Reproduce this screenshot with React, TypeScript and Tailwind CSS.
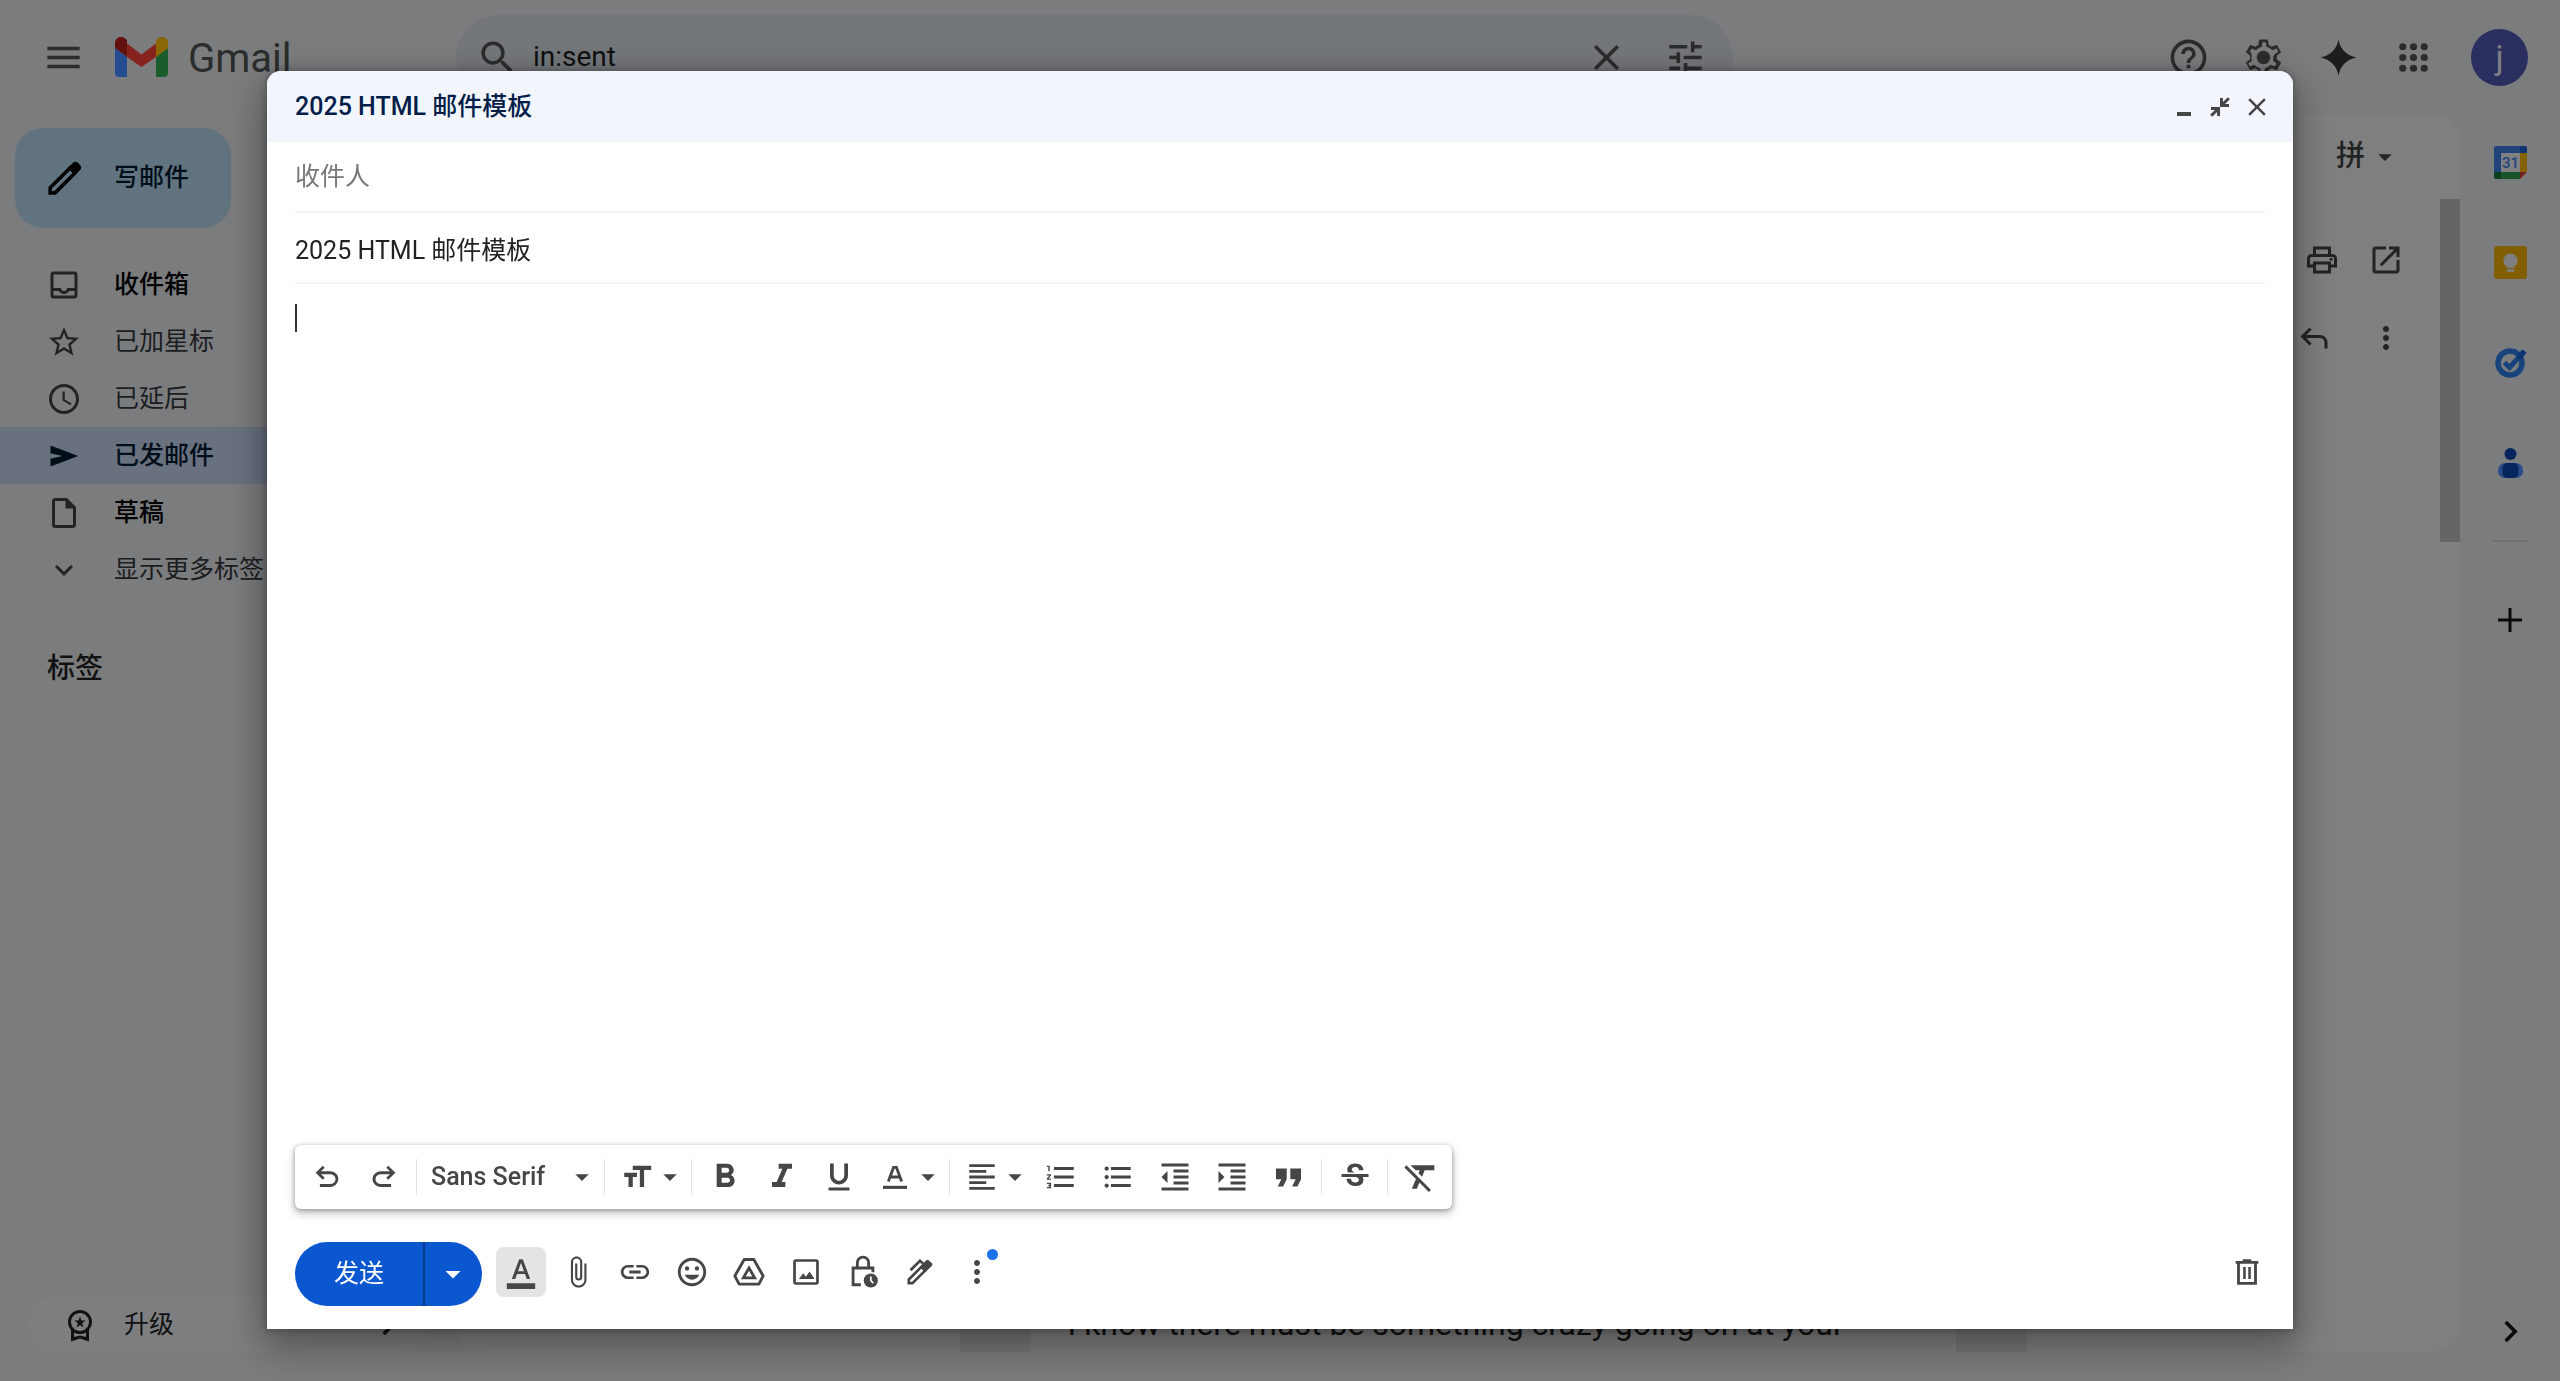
import { useState } from 'react';
import type { ComponentType, ReactNode } from 'react';
import {
  MdArrowDropDown,
  MdAttachFile,
  MdClose,
  MdExpandMore,
  MdFormatAlignLeft,
  MdFormatBold,
  MdFormatClear,
  MdFormatColorText,
  MdFormatIndentDecrease,
  MdFormatIndentIncrease,
  MdFormatItalic,
  MdFormatListBulleted,
  MdFormatListNumbered,
  MdFormatQuote,
  MdFormatSize,
  MdFormatUnderlined,
  MdHelpOutline,
  MdLink,
  MdMenu,
  MdMoreVert,
  MdOpenInNew,
  MdOutlineInbox,
  MdOutlineInsertDriveFile,
  MdOutlineInsertEmoticon,
  MdOutlinePrint,
  MdOutlineWorkspacePremium,
  MdSchedule,
  MdSearch,
  MdStarBorder,
  MdStrikethroughS,
  MdTune,
} from 'react-icons/md';

type IconProps = { className?: string };
type Icon = ComponentType<IconProps>;

/* Icons */

function Svg({ className, viewBox = '0 0 24 24', children }: IconProps & { viewBox?: string; children: ReactNode }) {
  return (
    <svg className={className} viewBox={viewBox} fill="currentColor" aria-hidden="true">
      {children}
    </svg>
  );
}

const UndoIcon = ({ className }: IconProps) => (
  <Svg className={className} viewBox="0 -960 960 960">
    <path d="M280-200v-80h284q63 0 109.5-40T720-420q0-60-46.5-100T564-560H312l104 104-56 56-200-200 200-200 56 56-104 104h252q97 0 169.5 63T800-420q0 94-72.5 157T564-200H280Z" />
  </Svg>
);

const RedoIcon = ({ className }: IconProps) => (
  <Svg className={className} viewBox="0 -960 960 960">
    <path d="M396-200q-97 0-169.5-63T154-420q0-94 72.5-157T396-640h252L544-744l56-56 200 200-200 200-56-56 104-104H396q-63 0-109.5 40T240-420q0 60 46.5 100T396-280h284v80H396Z" />
  </Svg>
);

const ReplyIcon = ({ className }: IconProps) => (
  <Svg className={className} viewBox="0 -960 960 960">
    <path d="M760-200v-160q0-50-35-85t-85-35H273l144 144-57 56-240-240 240-240 57 56-144 144h367q83 0 141.5 58.5T840-360v160h-80Z" />
  </Svg>
);

const PencilIcon = ({ className }: IconProps) => (
  <Svg className={className}>
    <path d="M4 17.2 15.2 6l2.8 2.8L6.8 20H4z" fill="none" stroke="currentColor" strokeWidth="2" />
    <path d="M13.8 6.2l2.9-2.9a2 2 0 0 1 2.9 0l1.1 1.1a2 2 0 0 1 0 2.9l-2.9 2.9z" />
  </Svg>
);

const SentIcon = ({ className }: IconProps) => (
  <Svg className={className}>
    <path d="M3 5l18.5 7L3 19v-5.2l8-1.8-8-1.8z" />
  </Svg>
);

const SparkIcon = ({ className }: IconProps) => (
  <Svg className={className}>
    <path d="M12 2c1 5.4 4.6 9 10 10-5.4 1-9 4.6-10 10-1-5.4-4.6-9-10-10 5.4-1 9-4.6 10-10z" />
  </Svg>
);

const SettingsIcon = ({ className }: IconProps) => (
  <Svg className={className}>
    <path d="M19.43 12.98c.04-.32.07-.64.07-.98s-.03-.66-.07-.98l2.11-1.65c.19-.15.24-.42.12-.64l-2-3.46a.5.5 0 0 0-.61-.22l-2.49 1c-.52-.4-1.08-.73-1.69-.98l-.38-2.65A.49.49 0 0 0 14 2h-4a.49.49 0 0 0-.49.42l-.38 2.65c-.61.25-1.17.59-1.69.98l-2.49-1a.5.5 0 0 0-.61.22l-2 3.46c-.13.22-.07.49.12.64l2.11 1.65c-.04.32-.07.65-.07.98s.03.66.07.98l-2.11 1.65c-.19.15-.24.42-.12.64l2 3.46c.12.22.39.3.61.22l2.49-1c.52.4 1.08.73 1.69.98l.38 2.65c.03.24.24.42.49.42h4c.25 0 .46-.18.49-.42l.38-2.65c.61-.25 1.17-.59 1.69-.98l2.49 1c.23.09.49 0 .61-.22l2-3.46c.12-.22.07-.49-.12-.64zM17.45 11.27c.04.31.05.52.05.73s-.02.43-.05.73l-.14 1.13 1.97 1.54-.95 1.63-2.31-.93-1.02.79c-.43.32-.84.56-1.25.73l-1.06.43-.35 2.45h-1.9l-.35-2.45-1.06-.43c-.43-.18-.83-.41-1.23-.71l-1.04-.81-2.31.93-.95-1.63 1.97-1.54-.14-1.13c-.03-.31-.05-.54-.05-.74s.02-.43.05-.73l.14-1.13L4.48 8.6l.95-1.63 2.31.93 1.02-.79c.43-.32.84-.56 1.25-.73l1.06-.43.35-2.45h1.9l.35 2.45 1.06.43c.43.18.83.41 1.23.71l1.04.81 2.31-.93.95 1.63-1.97 1.54z" />
    <circle cx="12" cy="12" r="3.8" />
  </Svg>
);

const AppsIcon = ({ className }: IconProps) => (
  <Svg className={className}>
    {[6, 12, 18].map((y) => [6, 12, 18].map((x) => <circle key={`${x}-${y}`} cx={x} cy={y} r="2" />))}
  </Svg>
);

const CollapseIcon = ({ className }: IconProps) => (
  <Svg className={className} viewBox="0 0 20 20">
    <path d="M17.900.2 19.900 2.200 15 7.100H19V10h-9V1h2.900v4zM2.100 19.800.1 17.800 5 12.900H1V10h9v9H7.100v-4z" />
  </Svg>
);

const TextColorIcon = ({ className }: IconProps) => (
  <Svg className={className}>
    <path d="M7.3 15.2 11 5.2h2l3.7 10M8.800 12h6.400" fill="none" stroke="currentColor" strokeWidth="2" />
    <path d="M3.500 18.200h17v2.200h-17z" />
  </Svg>
);

const DriveIcon = ({ className }: IconProps) => (
  <Svg className={className}>
    <g fill="none" stroke="currentColor" strokeWidth="2" strokeLinejoin="round">
      <path d="M8.600 3.200h6.800l6.600 11.600-3 5.800H5l-3-5.800z" />
      <path d="M12 9.200l4 6.900H8z" strokeLinejoin="miter" />
    </g>
  </Svg>
);

const PhotoIcon = ({ className }: IconProps) => (
  <Svg className={className}>
    <rect x="3.900" y="3.900" width="16.200" height="16.200" rx="1" fill="none" stroke="currentColor" strokeWidth="1.900" />
    <path d="M7 17l3-4.200 1.900 2.500 2.600-3.600L18 17z" />
  </Svg>
);

const LockClockIcon = ({ className }: IconProps) => (
  <Svg className={className}>
    <g fill="none" stroke="currentColor" strokeWidth="2">
      <path d="M10.500 21H5V9.200h14v3" />
      <path d="M8 9V5.500a4 4 0 0 1 8 0V9" />
    </g>
    <circle cx="17.500" cy="18" r="5" />
    <path d="M17.500 15.200V18l1.700 1.900" fill="none" stroke="#fff" strokeWidth="1.200" />
  </Svg>
);

const SignatureIcon = ({ className }: IconProps) => (
  <Svg className={className}>
    <path d="M4.100 17.300 13 8.400l2.600 2.600-8.900 8.900H4.100z" fill="none" stroke="currentColor" strokeWidth="1.900" />
    <path d="M12 8.200 16.500 3.700c.5-.5 1.200-.5 1.700 0l.8.8 1.300 1.200c.6.600.6 1.400 0 2L15.800 12.200z" />
    <path d="M5.300 10.800 12 4.100l2.300 2" fill="none" stroke="currentColor" strokeWidth="1.900" />
  </Svg>
);

const TrashIcon = ({ className }: IconProps) => (
  <Svg className={className}>
    <g fill="none" stroke="currentColor" strokeWidth="2">
      <path d="M4 5.200h16M9 4h6M6 5.500V20h12V5.500" />
      <path d="M10.200 8.500v8.500M13.800 8.500v8.500" strokeWidth="1.800" />
    </g>
  </Svg>
);

function GmailLogo({ className }: IconProps) {
  return (
    <svg className={className} viewBox="0 0 53 40" role="img" aria-label="Gmail">
      <path d="M0 11 12 20v20H4a4 4 0 0 1-4-4z" fill="#244c90" />
      <path d="M53 11 41 20v20h8a4 4 0 0 0 4-4z" fill="#1a5c2c" />
      <path d="M12 6.500 26.500 17.500 41 6.500V20L26.500 30 12 20z" fill="#86231c" />
      <path d="M0 11V6C0 1 5.500-1.800 9.500 1L12 3v17L0 11z" fill="#63110f" />
      <path d="M53 11V6c0-5-5.500-7.800-9.500-5L41 3v17l12-9z" fill="#8a6604" />
    </svg>
  );
}

function CalendarLogo() {
  return (
    <svg className="size-[33px]" viewBox="0 0 33 33" aria-hidden="true">
      <path d="M2 0h25v7H7v19H0V2a2 2 0 0 1 2-2z" fill="#21437c" />
      <path d="M27 0h4a2 2 0 0 1 2 2v5h-7V0z" fill="#0f3472" />
      <path d="M26 7h7v19h-7z" fill="#846204" />
      <path d="M7 26h19v7H7z" fill="#1a542a" />
      <path d="M0 26h7v7H2a2 2 0 0 1-2-2z" fill="#0c401c" />
      <path d="M26 26h7l-7 7z" fill="#75211a" />
      <path d="M7 7h19v19H7z" fill="#7f8081" />
      <text x="16.500" y="22" textAnchor="middle" fontSize="15" fontFamily="Roboto, sans-serif" fontWeight="500" fill="#21437c">
        31
      </text>
    </svg>
  );
}

function KeepLogo() {
  return (
    <svg className="size-[33px]" viewBox="0 0 33 33" aria-hidden="true">
      <rect width="33" height="33" rx="3" fill="#815e02" />
      <path d="M16.500 7.500a7 7 0 0 1 3.800 12.900V22h-7.600v-1.600A7 7 0 0 1 16.500 7.500z" fill="#7f7f7f" />
      <path d="M12.700 23.200h7.600v2.600h-7.600z" fill="#7f7f7f" />
    </svg>
  );
}

function TasksLogo() {
  return (
    <svg className="size-[33px]" viewBox="0 0 33 33" fill="none" aria-hidden="true">
      <circle cx="16" cy="17" r="12" stroke="#17427c" strokeWidth="5.500" />
      <path d="M10.500 16.500l5 5L29 7" stroke="#17427c" strokeWidth="5" />
      <path d="M24 12.500l6.500-7.500" stroke="#0f3472" strokeWidth="5.500" />
    </svg>
  );
}

function ContactsLogo() {
  return (
    <svg className="size-[33px]" viewBox="0 0 33 33" aria-hidden="true">
      <rect x="4" y="17" width="25" height="15" rx="7" fill="#2c4a88" />
      <rect x="8.500" y="17" width="16" height="15" rx="5" fill="#06255c" />
      <circle cx="16.500" cy="8" r="6" fill="#06255c" />
    </svg>
  );
}

/* Mailbox behind the composer */

type NavItem = { label: string; icon: Icon; bold?: boolean; active?: boolean };

const navItems: NavItem[] = [
  { label: '收件箱', icon: MdOutlineInbox, bold: true },
  { label: '已加星标', icon: MdStarBorder },
  { label: '已延后', icon: MdSchedule },
  { label: '已发邮件', icon: SentIcon, bold: true, active: true },
  { label: '草稿', icon: MdOutlineInsertDriveFile, bold: true },
  { label: '显示更多标签', icon: MdExpandMore },
];

function Header() {
  return (
    <header className="flex h-[114px] shrink-0 items-center text-[#2b2c2c]">
      <div className="flex w-[456px] shrink-0 items-center pl-[42px]">
        <button aria-label="主菜单">
          <MdMenu className="size-[43px]" />
        </button>
        <a href="#inbox" className="ml-[30px] flex items-center gap-5">
          <GmailLogo className="h-10 w-[53px]" />
          <span className="pt-1 text-[40px] leading-none">Gmail</span>
        </a>
      </div>

      <form className="flex h-[85px] max-w-[1277px] flex-1 items-center rounded-full bg-[#74777a] pr-[26px] pl-5">
        <button type="button" aria-label="搜索邮件">
          <MdSearch className="size-[43px]" />
        </button>
        <input
          aria-label="搜索"
          defaultValue="in:sent"
          className="ml-[14px] min-w-0 flex-1 bg-transparent text-[28px] text-[#0f1010] outline-none"
        />
        <button type="button" aria-label="清除搜索内容">
          <MdClose className="size-[43px]" />
        </button>
        <button type="button" aria-label="搜索选项" className="ml-9">
          <MdTune className="size-[43px]" />
        </button>
      </form>

      <div className="ml-auto flex items-center gap-8 pr-8">
        <button aria-label="支持">
          <MdHelpOutline className="size-[43px]" />
        </button>
        <button aria-label="设置">
          <SettingsIcon className="size-[43px]" />
        </button>
        <button aria-label="Gemini" className="text-[#1c1d1d]">
          <SparkIcon className="size-[43px]" />
        </button>
        <button aria-label="Google 应用">
          <AppsIcon className="size-[43px]" />
        </button>
        <button className="ml-1 flex size-[57px] items-center justify-center rounded-full bg-[#2b2f60] text-[34px] text-[#7f7f84]">
          j
        </button>
      </div>
    </header>
  );
}

function Sidebar() {
  return (
    <aside className="flex w-[456px] shrink-0 flex-col pt-[14px] pb-7">
      <button className="ml-[15px] flex h-[100px] w-[216px] items-center gap-7 rounded-[28px] bg-[#61737f] pl-7 text-[25px] font-medium text-[#000f1a]">
        <PencilIcon className="size-[43px] text-black" />
        写邮件
      </button>

      <nav className="mt-7">
        {navItems.map(({ label, icon: NavIcon, bold, active }) => (
          <a
            key={label}
            href="#"
            className={`flex h-[57px] items-center gap-8 pl-[46px] text-[25px] ${
              active ? 'rounded-r-full bg-[#69717f] text-[#000e1a]' : ''
            } ${bold ? 'font-medium' : ''}`}
          >
            <NavIcon className={active ? 'size-9' : 'size-9 text-[#222323]'} />
            <span className={bold ? '' : 'text-[#1c1d1e]'}>{label}</span>
          </a>
        ))}
      </nav>

      <h2 className="mt-[50px] pl-[47px] text-[28px] font-medium text-[#101112]">标签</h2>

      <a href="#upgrade" className="mx-7 mt-auto flex h-[57px] items-center rounded-full bg-[#7d7e7f] pr-[18px] pl-[34px] text-[25px] text-[#101112]">
        <MdOutlineWorkspacePremium className="size-9" />
        <span className="ml-[26px] flex-1">升级</span>
        <MdExpandMore className="size-[43px] -rotate-90" />
      </a>
    </aside>
  );
}

function MessagePane() {
  return (
    <main className="mb-[29px] flex min-w-0 flex-1 flex-col overflow-hidden rounded-[28px] bg-[#7f7f7f] text-[#222323]">
      <div className="flex h-[85px] items-center justify-end pr-[59px]">
        <button className="flex items-center text-[29px] font-medium">
          拼
          <MdArrowDropDown className="ml-1 size-8" />
        </button>
      </div>
      <div className="flex flex-1">
        <div className="flex flex-1 flex-col">
          <div className="mt-[43px] flex justify-end gap-7 pr-9">
            <button aria-label="全部打印">
              <MdOutlinePrint className="size-9" />
            </button>
            <button aria-label="在新窗口中打开">
              <MdOpenInNew className="size-9" />
            </button>
          </div>
          <div className="mt-[42px] flex justify-end gap-9 pr-9">
            <button aria-label="回复">
              <ReplyIcon className="size-9" />
            </button>
            <button aria-label="更多">
              <MdMoreVert className="size-9" />
            </button>
          </div>
          <div className="mt-auto flex justify-center pl-[90px]">
            <div className="w-[1067px] bg-[#767676] px-[71px]">
              <p className="bg-[#7f7f7f] px-[37px] pb-1.5 text-[32px] leading-[44px] whitespace-nowrap text-[#101010]">
                I know there must be something crazy going on at your
              </p>
            </div>
          </div>
        </div>
        <div className="h-[343px] w-5 bg-[#656565]" />
      </div>
    </main>
  );
}

function SidePanel() {
  return (
    <aside className="flex w-[100px] shrink-0 flex-col items-center pt-8 pb-7 text-[#0a0a0a]">
      <div className="flex flex-col gap-[67px]">
        <button aria-label="日历">
          <CalendarLogo />
        </button>
        <button aria-label="Keep">
          <KeepLogo />
        </button>
        <button aria-label="Tasks">
          <TasksLogo />
        </button>
        <button aria-label="通讯录">
          <ContactsLogo />
        </button>
      </div>
      <div className="mt-[61px] h-0.5 w-9 bg-[#6f7172]" />
      <button aria-label="获取插件" className="mt-[60px]">
        <Svg className="size-9">
          <path d="M11 4h2v7h7v2h-7v7h-2v-7H4v-2h7z" />
        </Svg>
      </button>
      <button aria-label="隐藏侧边栏" className="mt-auto">
        <MdExpandMore className="size-[43px] -rotate-90" />
      </button>
    </aside>
  );
}

/* Composer */

type ToolButtonProps = { label: string; icon: Icon; menu?: boolean; size?: string };

function ToolButton({ label, icon: ToolIcon, menu, size = 'size-[34px]' }: ToolButtonProps) {
  return (
    <button aria-label={label} className={`flex h-full items-center ${menu ? 'w-[78px] pl-[11px]' : 'w-[57px] justify-center'}`}>
      <ToolIcon className={size} />
      {menu && <MdArrowDropDown className="size-8" />}
    </button>
  );
}

function Divider() {
  return <div className="mx-1 h-9 w-px bg-[#e3e3e3]" />;
}

function FormatToolbar() {
  return (
    <div className="flex h-16 w-fit items-center rounded-md bg-white px-[3px] text-[#444746] shadow-[0_4px_8px_1px_rgba(0,0,0,0.22),0_1px_4px_rgba(0,0,0,0.28)]">
      <ToolButton label="撤消" icon={UndoIcon} />
      <ToolButton label="重做" icon={RedoIcon} />
      <Divider />
      <div className="relative w-[179px]">
        <select aria-label="字体" className="w-full appearance-none bg-transparent pl-[10px] text-[25px] font-medium outline-none">
          <option>Sans Serif</option>
          <option>Serif</option>
        </select>
        <MdArrowDropDown className="pointer-events-none absolute top-1/2 right-[2px] size-8 -translate-y-1/2" />
      </div>
      <Divider />
      <ToolButton label="大小" icon={MdFormatSize} menu />
      <Divider />
      <ToolButton label="粗体" icon={MdFormatBold} size="size-10" />
      <ToolButton label="斜体" icon={MdFormatItalic} size="size-10" />
      <ToolButton label="下划线" icon={MdFormatUnderlined} size="size-9" />
      <ToolButton label="文字颜色" icon={TextColorIcon} menu />
      <Divider />
      <ToolButton label="对齐" icon={MdFormatAlignLeft} menu />
      <ToolButton label="编号列表" icon={MdFormatListNumbered} />
      <ToolButton label="项目符号列表" icon={MdFormatListBulleted} />
      <ToolButton label="减少缩进" icon={MdFormatIndentDecrease} size="size-9" />
      <ToolButton label="增加缩进" icon={MdFormatIndentIncrease} size="size-9" />
      <ToolButton label="引用" icon={MdFormatQuote} size="size-[43px]" />
      <Divider />
      <ToolButton label="删除线" icon={MdStrikethroughS} size="size-9" />
      <Divider />
      <ToolButton label="清除格式" icon={MdFormatClear} size="size-10" />
    </div>
  );
}

const attachTools: { label: string; icon: Icon }[] = [
  { label: '附加文件', icon: MdAttachFile },
  { label: '插入链接', icon: MdLink },
  { label: '插入表情符号', icon: MdOutlineInsertEmoticon },
  { label: '使用云端硬盘插入文件', icon: DriveIcon },
  { label: '插入照片', icon: PhotoIcon },
  { label: '切换机密模式', icon: LockClockIcon },
  { label: '插入签名', icon: SignatureIcon },
];

function Composer() {
  const [subject, setSubject] = useState('2025 HTML 邮件模板');
  const [body, setBody] = useState('');
  const [showFormat, setShowFormat] = useState(true);

  return (
    <section
      role="dialog"
      aria-label={subject}
      className="flex flex-1 flex-col overflow-hidden rounded-t-[14px] bg-white shadow-[0_14px_36px_4px_rgba(0,0,0,0.35),0_0_8px_rgba(0,0,0,0.3)]"
    >
      <div className="flex h-[71px] items-center bg-[#f2f6fc] pr-[21px] pl-7">
        <h1 className="flex-1 text-[25px] font-medium text-[#041e49]">{subject}</h1>
        <div className="flex items-center gap-2 text-[#444746]">
          <button aria-label="最小化" className="flex size-7 items-center justify-center">
            <span className="mt-[14px] h-1 w-[14px] bg-[#444746]" />
          </button>
          <button aria-label="退出全屏" className="flex size-7 items-center justify-center">
            <CollapseIcon className="size-5" />
          </button>
          <button aria-label="关闭">
            <MdClose className="size-[30px]" />
          </button>
        </div>
      </div>

      <div className="mx-7 flex flex-1 flex-col text-[25px] text-[#222]">
        <input
          aria-label="收件人"
          placeholder="收件人"
          className="h-[71px] border-b-2 border-[#f3f4f4] outline-none placeholder:text-[#777]"
        />
        <input
          aria-label="主题"
          value={subject}
          onChange={(e) => setSubject(e.target.value)}
          className="h-[71px] border-b-2 border-[#f3f4f4] outline-none"
        />
        <div className="relative flex flex-1 pt-5">
          <textarea
            aria-label="邮件正文"
            value={body}
            onChange={(e) => setBody(e.target.value)}
            className="flex-1 resize-none outline-none"
          />
          {!body && <span className="pointer-events-none absolute top-5 left-0 h-7 w-0.5 bg-[#333]" />}
        </div>
      </div>

      <div className="pr-[21px] pb-[23px] pl-7">
        {showFormat && <FormatToolbar />}
        <div className="mt-[33px] flex items-center text-[#444746]">
          <div className="flex h-16 overflow-hidden rounded-full bg-[#0b57d0] text-white">
            <button className="w-[128px] text-[25px]">发送</button>
            <button aria-label="更多发送选项" className="flex w-[59px] items-center border-l-2 border-[#063a8f] pl-[10px]">
              <MdArrowDropDown className="size-9" />
            </button>
          </div>
          <div className="mb-1 ml-[14px] flex gap-[7px]">
            <button
              aria-label="格式设置选项"
              aria-pressed={showFormat}
              onClick={() => setShowFormat(!showFormat)}
              className="flex size-[50px] items-center justify-center rounded-lg bg-[#e4e4e4]"
            >
              <MdFormatColorText className="size-[34px]" />
            </button>
            {attachTools.map(({ label, icon: ToolIcon }) => (
              <button key={label} aria-label={label} className="flex size-[50px] items-center justify-center">
                <ToolIcon className="size-[34px]" />
              </button>
            ))}
            <button aria-label="更多选项" className="relative flex size-[50px] items-center justify-center">
              <MdMoreVert className="size-9" />
              <span className="absolute top-[2px] right-[4px] size-[11px] rounded-full bg-[#1a73e8]" />
            </button>
          </div>
          <button aria-label="舍弃草稿" className="mb-1 ml-auto flex size-[50px] items-center justify-center">
            <TrashIcon className="size-[34px]" />
          </button>
        </div>
      </div>
    </section>
  );
}

export default function App() {
  return (
    <div className="flex h-screen flex-col overflow-hidden bg-[#7b7c7e] font-['Roboto','Noto_Sans_CJK_SC',sans-serif]">
      <Header />
      <div className="flex min-h-0 flex-1">
        <Sidebar />
        <MessagePane />
        <SidePanel />
      </div>

      <div className="fixed inset-0 flex px-[267px] pt-[71px] pb-[52px]">
        <Composer />
      </div>
    </div>
  );
}
